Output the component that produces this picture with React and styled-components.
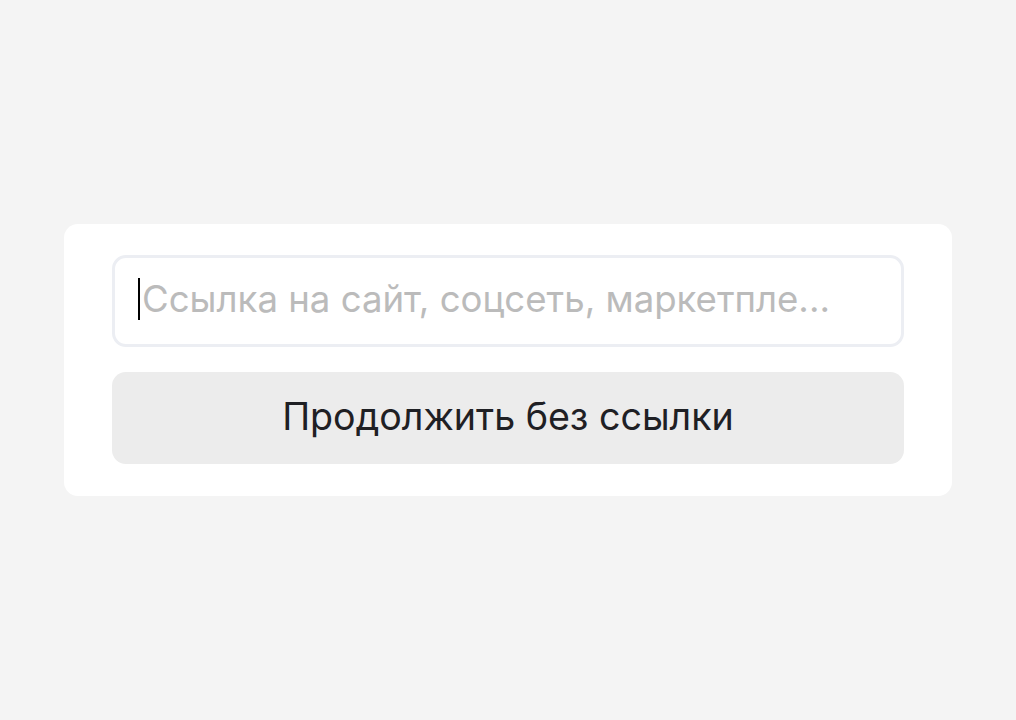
import React from "react"
import styled, { createGlobalStyle } from "styled-components"

const GlobalStyle = createGlobalStyle`
  html, body {
    margin: 0;
    padding: 0;
    background: #f4f4f4;
    font-family: Inter, "Noto Sans", sans-serif;
  }
`

const Page = styled.div`
  width: 1016px;
  height: 720px;
  display: flex;
  align-items: flex-start;
  justify-content: center;
  padding-top: 224px;
  box-sizing: border-box;
`

const Card = styled.div`
  width: 888px;
  box-sizing: border-box;
  background: #ffffff;
  border-radius: 14px;
  padding: 31px 48px 32px;
  display: flex;
  flex-direction: column;
  gap: 25px;
`

const Field = styled.label`
  position: relative;
  display: block;
  height: 92px;
`

const Input = styled.input`
  width: 100%;
  height: 100%;
  box-sizing: border-box;
  border: 3px solid #eceef3;
  border-radius: 14px;
  background: #ffffff;
  padding: 0 26px 4px 27px;
  font-family: Inter, "Noto Sans", sans-serif;
  font-size: 36.6px;
  color: #21201f;
  outline: none;

  &::placeholder {
    color: #bbbbbb;
  }
`

const Caret = styled.span`
  position: absolute;
  left: 26px;
  top: 23px;
  width: 2px;
  height: 42px;
  background: #000000;
`

const Button = styled.button`
  height: 92px;
  border: none;
  border-radius: 14px;
  background: #ececec;
  color: #1f2024;
  font-family: Inter, "Noto Sans", sans-serif;
  font-size: 37.6px;
  padding: 0 0 4px;
  cursor: pointer;
`

export default () => (
  <>
    <GlobalStyle />
    <Page>
      <Card>
        <Field>
          <Input placeholder="Ссылка на сайт, соцсеть, маркетпле..." />
          <Caret />
        </Field>
        <Button>Продолжить без ссылки</Button>
      </Card>
    </Page>
  </>
)
